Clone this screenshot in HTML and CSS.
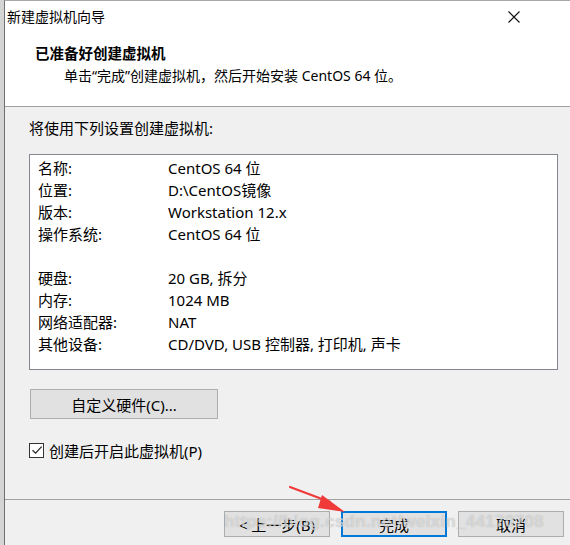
FILE: index.html
```html
<!DOCTYPE html>
<html lang="zh-CN">
<head>
<meta charset="utf-8">
<title>新建虚拟机向导</title>
<link rel="stylesheet" href="styles.css">
</head>
<body>
<div class="strip"></div>
<div class="window">
  <div class="head">
    <div class="titlebar">
      <span class="title">新建虚拟机向导</span>
      <svg class="close" width="12" height="12" viewBox="0 0 12 12"><path d="M0.5 0.5 L11.5 11.5 M11.5 0.5 L0.5 11.5" stroke="#111" stroke-width="1.1" fill="none"/></svg>
    </div>
    <div class="h1">已准备好创建虚拟机</div>
    <div class="sub">单击“完成”创建虚拟机，然后开始安装 CentOS 64 位。</div>
  </div>
  <div class="content">
    <div class="intro">将使用下列设置创建虚拟机:</div>
    <div class="box">
      <div class="row"><span class="k">名称:</span><span class="v">CentOS 64 位</span></div>
      <div class="row"><span class="k">位置:</span><span class="v">D:\CentOS镜像</span></div>
      <div class="row"><span class="k">版本:</span><span class="v">Workstation 12.x</span></div>
      <div class="row"><span class="k">操作系统:</span><span class="v">CentOS 64 位</span></div>
      <div class="row"></div>
      <div class="row"><span class="k">硬盘:</span><span class="v">20 GB, 拆分</span></div>
      <div class="row"><span class="k">内存:</span><span class="v">1024 MB</span></div>
      <div class="row"><span class="k">网络适配器:</span><span class="v">NAT</span></div>
      <div class="row"><span class="k">其他设备:</span><span class="v">CD/DVD, USB 控制器, 打印机, 声卡</span></div>
    </div>
    <div class="btn custom">自定义硬件(C)...</div>
    <label class="check">
      <span class="cb"><svg width="12" height="12" viewBox="0 0 12 12"><path d="M1.5 6.2 L4.6 9.2 L10.6 2.6" stroke="#222" stroke-width="1.2" fill="none"/></svg></span>
      <span>创建后开启此虚拟机(P)</span>
    </label>
  </div>
  <div class="footer">
    <div class="btn nav">&lt; 上一步(B)</div>
    <div class="btn nav primary">完成</div>
    <div class="btn nav">取消</div>
  </div>
</div>
<div class="watermark">https://blog.csdn.net/weixin_44170708</div>
<svg class="arrow" width="80" height="40" viewBox="0 0 80 40">
  <path d="M2 2 L42 17" stroke="#f03a3a" stroke-width="2.2" stroke-linecap="round" fill="none"/>
  <path d="M34 10 L57 27 L30 23 Z" fill="#f03a3a"/>
</svg>
</body>
</html>
```
FILE: styles.css
```css
html, body {
  margin: 0;
  padding: 0;
}
body {
  width: 570px;
  height: 545px;
  overflow: hidden;
  display: flex;
  background: #d2d2d2;
  font-family: "Noto Sans", "Noto Sans CJK SC", sans-serif;
  font-size: 15px;
  color: #000;
  position: relative;
}
.strip {
  width: 4px;
  flex: none;
  background: #d4d4d4;
}
.window {
  flex: 1;
  display: flex;
  flex-direction: column;
  background: #f0f0f0;
  border-left: 1px solid #6f6f6f;
  border-top: 1px solid #a8a8a8;
}
.head {
  background: #fff;
  height: 106px;
  box-sizing: border-box;
  border-bottom: 1px solid #a0a0a0;
  display: flex;
  flex-direction: column;
}
.titlebar {
  height: 32px;
  display: flex;
  align-items: center;
  justify-content: space-between;
  padding: 0 50px 0 2px;
}
.title {
  font-size: 14px;
  line-height: 20px;
}
.close {
  display: block;
}
.h1 {
  font-family: "Noto Sans CJK SC", sans-serif;
  font-weight: bold;
  font-size: 14.5px;
  line-height: 20px;
  margin: 10px 0 0 30px;
}
.sub {
  font-size: 14px;
  line-height: 20px;
  margin: 3px 0 0 59px;
}
.content {
  padding: 11px 0 0 24px;
  height: 393px;
  box-sizing: border-box;
  border-bottom: 1px solid #a0a0a0;
}
.intro {
  line-height: 20px;
}
.box {
  margin-top: 16px;
  width: 529px;
  height: 216px;
  box-sizing: border-box;
  background: #fff;
  border: 1px solid #828790;
  padding: 2px 0 0 8px;
}
.row {
  display: flex;
  height: 22px;
  line-height: 22px;
}
.k {
  width: 130px;
  flex: none;
}
.btn {
  box-sizing: border-box;
  background: #e1e1e1;
  border: 1px solid #adadad;
  display: flex;
  align-items: center;
  justify-content: center;
}
.custom {
  margin: 19px 0 0 1px;
  width: 188px;
  height: 30px;
}
.check {
  display: flex;
  align-items: center;
  margin: 21px 0 0 0;
  height: 20px;
}
.cb {
  box-sizing: border-box;
  width: 15px;
  height: 15px;
  border: 1px solid #333;
  background: #fff;
  display: flex;
  align-items: center;
  justify-content: center;
  margin-right: 5px;
}
.cb svg {
  display: block;
}
.footer {
  display: flex;
  padding: 11px 0 0 219px;
  gap: 11px;
}
.nav {
  width: 106px;
  height: 26px;
}
.primary {
  border: 2px solid #0078d7;
}
.watermark {
  position: absolute;
  left: 224px;
  top: 512px;
  font-family: "Liberation Sans", sans-serif;
  font-size: 17px;
  font-weight: bold;
  color: rgba(255, 255, 255, 0.5);
  text-shadow: 0 0 1px rgba(120, 120, 120, 0.55);
  letter-spacing: 0.3px;
  white-space: nowrap;
}
.arrow {
  position: absolute;
  left: 288px;
  top: 485px;
}
```
